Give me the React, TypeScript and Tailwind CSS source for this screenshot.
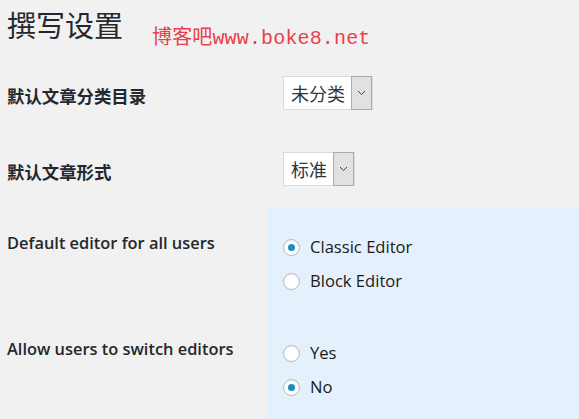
import React from "react";

const sans = "font-['Segoe_UI','Open_Sans','Noto_Sans_CJK_SC',sans-serif]";

function Select({ value }: { value: string }) {
  return (
    <div className="inline-flex h-[34px] items-stretch border border-[#dcdcdc] bg-white">
      <span className="flex items-center pl-[7px] pr-[6px] text-[18px] text-[#32373c] font-['Noto_Sans_CJK_SC',sans-serif]">
        {value}
      </span>
      <span className="my-[-1px] flex w-[21px] items-center justify-center border border-[#adadad] bg-[#e1e1e1]">
        <svg width="9" height="6" viewBox="0 0 9 6" fill="none">
          <path d="M1 1l3.5 3.5L8 1" stroke="#444" strokeWidth="1" />
        </svg>
      </span>
    </div>
  );
}

function Radio({ label, checked }: { label: string; checked?: boolean }) {
  return (
    <div className="flex h-[34px] items-center gap-[10px]">
      <span className="flex h-[17px] w-[17px] items-center justify-center rounded-full border border-[#b4b9be] bg-white shadow-[inset_0_1px_2px_rgba(0,0,0,0.08)]">
        {checked && <span className="h-[7px] w-[7px] rounded-full bg-[#1e8cbe]" />}
      </span>
      <span className="text-[16.6px] text-[#1a1a1a]">{label}</span>
    </div>
  );
}

export default function App() {
  return (
    <div className={`min-h-screen w-[579px] overflow-hidden bg-[#f1f1f1] text-[#23282d] ${sans}`}>
      {/* 标题 */}
      <div className="flex h-[60px] items-start pl-[7px] pt-[4px]">
        <h1 className="text-[29px] leading-[40px] font-normal font-['Noto_Sans_CJK_SC',sans-serif]">撰写设置</h1>
        <span className="ml-[29px] mt-[22px] text-[20px] leading-[26px] tracking-[0.15px] text-[#e8414a] font-['Liberation_Mono','Noto_Sans_CJK_SC',monospace]">
          博客吧www.boke8.net
        </span>
      </div>

      <div className="grid grid-cols-[268px_1fr]">
        <div className="h-[76px] pl-[7px] pt-[24px] text-[17.4px] leading-[24px] font-bold font-['Noto_Sans_CJK_SC',sans-serif]">
          默认文章分类目录
        </div>
        <div className="pl-[15px] pt-[16px]">
          <Select value="未分类" />
        </div>

        <div className="h-[72px] pl-[7px] pt-[24px] text-[17.4px] leading-[24px] font-bold font-['Noto_Sans_CJK_SC',sans-serif]">
          默认文章形式
        </div>
        <div className="pl-[15px] pt-[16px]">
          <Select value="标准" />
        </div>

        <div className="pl-[7px] pt-[24px] text-[16.4px] leading-[22px] font-semibold">
          Default editor for all users
        </div>
        <div className="h-[106px] bg-[#e4f1fc] pl-[15px] pt-[22px]">
          <Radio label="Classic Editor" checked />
          <Radio label="Block Editor" />
        </div>

        <div className="pl-[7px] pt-[24px] text-[16.4px] leading-[22px] font-semibold">
          Allow users to switch editors
        </div>
        <div className="h-[105px] bg-[#e4f1fc] pl-[15px] pt-[22px]">
          <Radio label="Yes" />
          <Radio label="No" checked />
        </div>
      </div>
    </div>
  );
}
